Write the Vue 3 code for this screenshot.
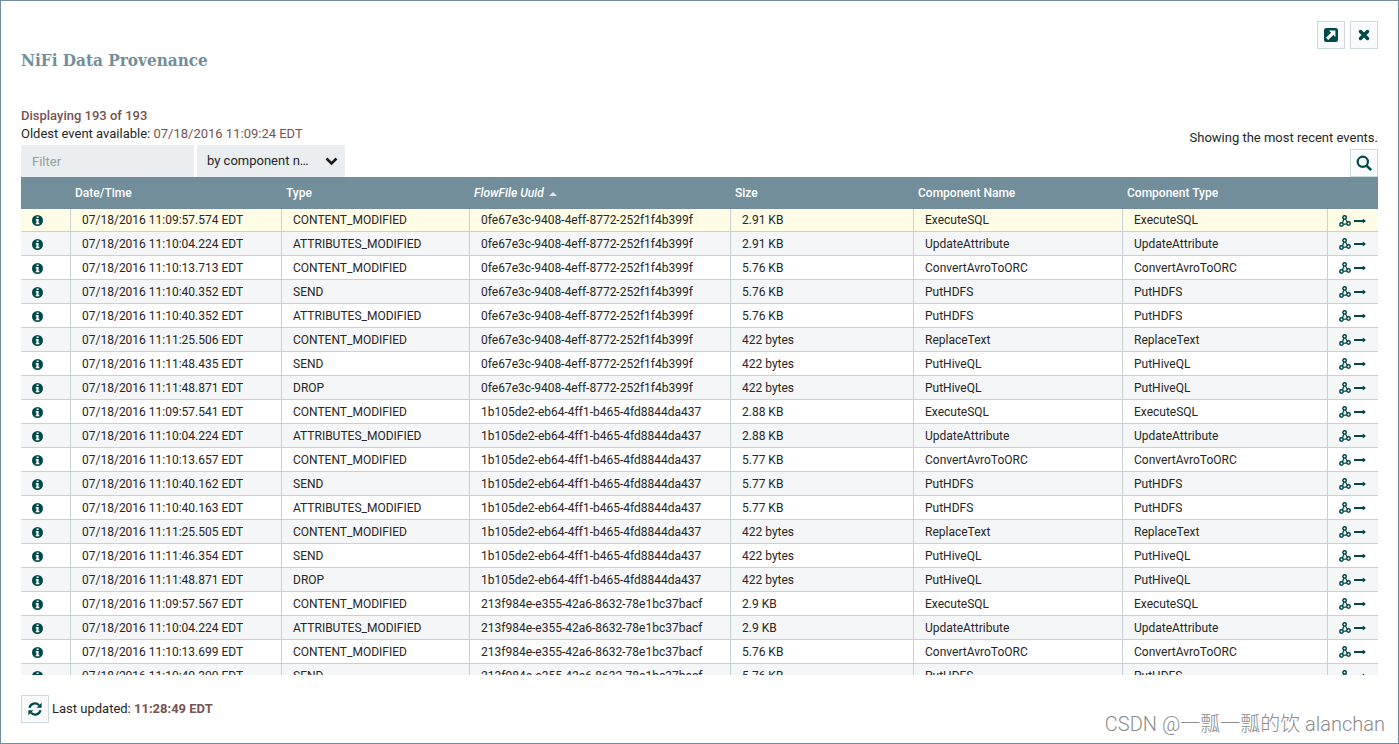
<script setup>
const columns = [
  { key: 'info', label: '', cls: 'c-info' },
  { key: 'time', label: 'Date/Time', cls: 'c-time' },
  { key: 'type', label: 'Type', cls: 'c-type' },
  { key: 'uuid', label: 'FlowFile Uuid', cls: 'c-uuid', sorted: true },
  { key: 'size', label: 'Size', cls: 'c-size' },
  { key: 'name', label: 'Component Name', cls: 'c-name' },
  { key: 'kind', label: 'Component Type', cls: 'c-kind' },
  { key: 'actions', label: '', cls: 'c-actions' }
]

const flowFiles = [
  {
    uuid: '0fe67e3c-9408-4eff-8772-252f1f4b399f',
    events: [
      ['11:09:57.574', 'CONTENT_MODIFIED', '2.91 KB', 'ExecuteSQL'],
      ['11:10:04.224', 'ATTRIBUTES_MODIFIED', '2.91 KB', 'UpdateAttribute'],
      ['11:10:13.713', 'CONTENT_MODIFIED', '5.76 KB', 'ConvertAvroToORC'],
      ['11:10:40.352', 'SEND', '5.76 KB', 'PutHDFS'],
      ['11:10:40.352', 'ATTRIBUTES_MODIFIED', '5.76 KB', 'PutHDFS'],
      ['11:11:25.506', 'CONTENT_MODIFIED', '422 bytes', 'ReplaceText'],
      ['11:11:48.435', 'SEND', '422 bytes', 'PutHiveQL'],
      ['11:11:48.871', 'DROP', '422 bytes', 'PutHiveQL']
    ]
  },
  {
    uuid: '1b105de2-eb64-4ff1-b465-4fd8844da437',
    events: [
      ['11:09:57.541', 'CONTENT_MODIFIED', '2.88 KB', 'ExecuteSQL'],
      ['11:10:04.224', 'ATTRIBUTES_MODIFIED', '2.88 KB', 'UpdateAttribute'],
      ['11:10:13.657', 'CONTENT_MODIFIED', '5.77 KB', 'ConvertAvroToORC'],
      ['11:10:40.162', 'SEND', '5.77 KB', 'PutHDFS'],
      ['11:10:40.163', 'ATTRIBUTES_MODIFIED', '5.77 KB', 'PutHDFS'],
      ['11:11:25.505', 'CONTENT_MODIFIED', '422 bytes', 'ReplaceText'],
      ['11:11:46.354', 'SEND', '422 bytes', 'PutHiveQL'],
      ['11:11:48.871', 'DROP', '422 bytes', 'PutHiveQL']
    ]
  },
  {
    uuid: '213f984e-e355-42a6-8632-78e1bc37bacf',
    events: [
      ['11:09:57.567', 'CONTENT_MODIFIED', '2.9 KB', 'ExecuteSQL'],
      ['11:10:04.224', 'ATTRIBUTES_MODIFIED', '2.9 KB', 'UpdateAttribute'],
      ['11:10:13.699', 'CONTENT_MODIFIED', '5.76 KB', 'ConvertAvroToORC'],
      ['11:10:40.300', 'SEND', '5.76 KB', 'PutHDFS']
    ]
  }
]

const rows = flowFiles.flatMap((file) =>
  file.events.map(([time, type, size, component]) => ({
    uuid: file.uuid,
    time: `07/18/2016 ${time} EDT`,
    type,
    size,
    component
  }))
)
</script>

<template>
  <main class="shell">
    <div class="window-actions">
      <button class="icon-button" type="button" aria-label="Open in new window">
        <svg width="14" height="14" viewBox="0 0 14 14">
          <rect width="14" height="14" rx="2.500" fill="#004849" />
          <path d="M5 2.600h6.400v6.400L9.300 6.900 4.200 12 2 9.800 7.100 4.700z" fill="#fff" />
        </svg>
      </button>
      <button class="icon-button" type="button" aria-label="Close">
        <svg width="12" height="12" viewBox="0 0 12 12">
          <path d="M2.500 2.500 9.500 9.500M9.500 2.500 2.500 9.500" stroke="#004849" stroke-width="3.500" stroke-linecap="round" />
        </svg>
      </button>
    </div>

    <h1 class="title">NiFi Data Provenance</h1>

    <section class="toolbar">
      <div class="left">
        <div class="displaying">Displaying 193 of 193</div>
        <div class="oldest">Oldest event available: <span class="value">07/18/2016 11:09:24 EDT</span></div>
        <div class="filters">
          <input class="filter" type="text" placeholder="Filter" aria-label="Filter" />
          <div class="select-box">
            <select class="select" aria-label="Filter by">
              <option>by component name</option>
            </select>
            <svg class="chevron" width="13" height="9" viewBox="0 0 13 9">
              <path d="M1.500 1.500 6.500 6.500 11.500 1.500" fill="none" stroke="#1a1a1a" stroke-width="2.600" />
            </svg>
          </div>
        </div>
      </div>
      <div class="right">
        <div class="recent">Showing the most recent events.</div>
        <button class="icon-button" type="button" aria-label="Search">
          <svg width="16" height="16" viewBox="0 0 16 16">
            <circle cx="6.800" cy="6.800" r="5.100" fill="none" stroke="#004849" stroke-width="2.200" />
            <path d="M10.600 10.600 14.400 14.400" stroke="#004849" stroke-width="2.600" stroke-linecap="round" />
          </svg>
        </button>
      </div>
    </section>

    <div class="table-view">
      <table class="events">
        <thead>
          <tr>
            <th v-for="c in columns" :key="c.key" :class="[c.cls, { sorted: c.sorted }]" scope="col">
              {{ c.label }}<span v-if="c.sorted" class="sort-arrow"></span>
            </th>
          </tr>
        </thead>
        <tbody>
          <tr v-for="(r, i) in rows" :key="i">
            <td class="info">
              <button class="cell-button" type="button" aria-label="View details">
                <svg width="11" height="11" viewBox="0 0 10 10">
                  <circle cx="5" cy="5" r="5" fill="#004849" />
                  <path d="M4.200 1.300h1.800v1.500H4.200zM3.400 3.700H6v3.400h.7v1.200H3.400V7.100h.7V4.900h-.7z" fill="#fff" />
                </svg>
              </button>
            </td>
            <td>{{ r.time }}</td>
            <td>{{ r.type }}</td>
            <td>{{ r.uuid }}</td>
            <td>{{ r.size }}</td>
            <td>{{ r.component }}</td>
            <td>{{ r.component }}</td>
            <td class="actions">
              <button class="cell-button" type="button" aria-label="Show lineage">
                <svg width="12" height="12" viewBox="0 0 12 12" fill="none" stroke="#004849" stroke-width="1.500">
                  <circle cx="5.600" cy="2.400" r="1.700" />
                  <circle cx="2.500" cy="9.500" r="1.700" />
                  <circle cx="9.500" cy="8.500" r="1.700" />
                  <path d="M5 4.100 3.400 8M6.400 4 8.500 7.100M4.200 9.300 7.800 8.800" stroke-width="1.200" />
                </svg>
              </button>
              <button class="cell-button" type="button" aria-label="Go to component">
                <svg width="12" height="6" viewBox="0 0 12 6">
                  <path d="M0 2.100h8.800V.4L12 3 8.800 5.600V3.900H0z" fill="#004849" />
                </svg>
              </button>
            </td>
          </tr>
        </tbody>
      </table>
    </div>

    <footer class="footer">
      <button class="icon-button" type="button" aria-label="Refresh">
        <svg width="14" height="14" viewBox="0 0 14 14">
          <path d="M1.500 5.800A5.600 5.600 0 0 1 11 3.200M12.500 8.200A5.600 5.600 0 0 1 3 10.800" fill="none" stroke="#004849" stroke-width="2.200" />
          <path d="M13.600 .8v5H8.600zM.4 13.200v-5h5z" fill="#004849" />
        </svg>
      </button>
      <span class="updated">Last updated: <b class="value">11:28:49 EDT</b></span>
    </footer>

    <div class="watermark">CSDN @一瓢一瓢的饮 alanchan</div>
  </main>
</template>

<style>
body {
  margin: 0;
  background: #728e9b;
}
</style>

<style scoped>
.shell {
  position: relative;
  box-sizing: border-box;
  height: 100vh;
  display: flex;
  flex-direction: column;
  padding: 20px;
  border: 1px solid #728e9b;
  background: #fff;
  font-family: Roboto, "Liberation Sans", sans-serif;
  font-size: 13px;
  line-height: 18px;
  color: #262626;
}
.window-actions {
  display: flex;
  justify-content: flex-end;
  gap: 5px;
}
.icon-button {
  box-sizing: border-box;
  width: 28px;
  height: 28px;
  padding: 0;
  display: flex;
  align-items: center;
  justify-content: center;
  border: 1px solid #ccdadb;
  background: #f9fafb;
}
.title {
  margin: 0;
  font-family: "Roboto Slab", "DejaVu Serif Condensed", "DejaVu Serif", serif;
  font-size: 17px;
  line-height: 22px;
  font-weight: 700;
  color: #728e9b;
}
.toolbar {
  display: flex;
  justify-content: space-between;
  align-items: flex-end;
  margin-top: 36px;
}
.displaying {
  font-weight: 500;
  color: #775351;
}
.value {
  color: #775351;
}
.filters {
  display: flex;
  gap: 3px;
  margin-top: 2px;
}
.filter {
  box-sizing: border-box;
  width: 173px;
  height: 32px;
  padding: 0 11px;
  border: 0;
  background: #eaeef0;
  font: inherit;
  color: #262626;
}
.filter::placeholder {
  color: #999c9e;
}
.select-box {
  position: relative;
  width: 148px;
}
.select {
  appearance: none;
  box-sizing: border-box;
  width: 100%;
  height: 32px;
  padding: 0 36px 0 10px;
  border: 0;
  border-radius: 0;
  background: #eaeef0;
  font: inherit;
  color: #262626;
  text-overflow: ellipsis;
  overflow: hidden;
  white-space: nowrap;
}
.chevron {
  position: absolute;
  right: 7px;
  top: 12px;
  pointer-events: none;
}
.right {
  display: flex;
  flex-direction: column;
  align-items: flex-end;
  gap: 2px;
}
.table-view {
  flex: 1;
  min-height: 0;
  overflow: hidden;
}
.events {
  width: 100%;
  table-layout: fixed;
  border-collapse: separate;
  border-spacing: 0;
  font-size: 12px;
}
.c-info,
.c-actions {
  width: 50px;
}
.c-time {
  width: 211px;
}
.c-type {
  width: 188px;
}
.c-uuid {
  width: 261px;
}
.c-size {
  width: 183px;
}
.c-name {
  width: 209px;
}
.c-kind {
  width: 205px;
}
th {
  box-sizing: border-box;
  height: 32px;
  padding: 0 4px;
  background: #728e9b;
  color: #fff;
  font-weight: 500;
  text-align: left;
}
.sorted {
  font-style: italic;
}
.sort-arrow {
  display: inline-block;
  margin-left: 5px;
  border: 4px solid transparent;
  border-top: 0;
  border-bottom-color: #dfe6e9;
  vertical-align: 1px;
}
td {
  box-sizing: border-box;
  height: 24px;
  padding: 0 11px;
  border-right: 1px solid #c7d2d7;
  border-bottom: 1px solid #c7d2d7;
  white-space: nowrap;
}
td:last-child {
  border-right: 0;
}
tbody tr:nth-child(even) {
  background: #f4f6f7;
}
tbody tr:first-child {
  background: #fffce6;
}
tbody tr:first-child td {
  height: 23px;
}
.cell-button {
  display: inline-flex;
  padding: 0;
  border: 0;
  background: none;
  vertical-align: middle;
}
.actions .cell-button + .cell-button {
  margin-left: 3px;
}
.footer {
  display: flex;
  align-items: center;
  gap: 3px;
  margin-top: 20px;
}
.updated {
  line-height: 20px;
}
.footer b {
  font-weight: 700;
}
.watermark {
  position: absolute;
  right: 13px;
  bottom: 6px;
  font-family: Roboto, "Noto Sans CJK SC", sans-serif;
  font-size: 20px;
  font-weight: 300;
  line-height: 26px;
  color: #8c8c8c;
}
</style>
